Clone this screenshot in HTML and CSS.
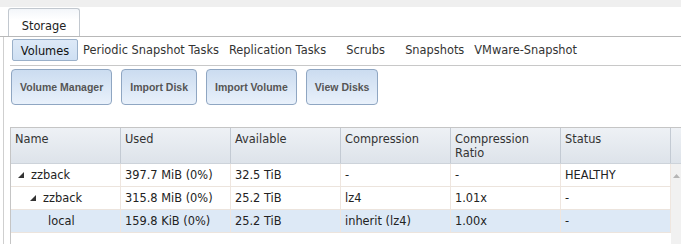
FILE: index.html
```html
<!DOCTYPE html>
<html lang="en">
<head>
<meta charset="UTF-8" />
<title>Storage</title>
<link rel="stylesheet" href="styles.css">
</head>
<body>
  <div class="topbar"></div>

  <div class="tabstrip">
    <div class="tab active">Storage</div>
  </div>

  <div class="panel">
    <div class="subtabs">
      <span class="subtab selected">Volumes</span>
      <span class="subtab">Periodic Snapshot Tasks</span>
      <span class="subtab">Replication Tasks</span>
      <span class="subtab">Scrubs</span>
      <span class="subtab">Snapshots</span>
      <span class="subtab">VMware-Snapshot</span>
    </div>

    <div class="toolbar">
      <button class="btn">Volume Manager</button>
      <button class="btn">Import Disk</button>
      <button class="btn">Import Volume</button>
      <button class="btn">View Disks</button>
    </div>

    <div class="grid">
      <div class="grid-head">
        <div class="hcell">Name</div>
        <div class="hcell">Used</div>
        <div class="hcell">Available</div>
        <div class="hcell">Compression</div>
        <div class="hcell">Compression<br>Ratio</div>
        <div class="hcell">Status</div>
        <div class="hfill"></div>
      </div>
      <div class="grid-body">
        <div class="rows">
          <div class="row">
            <div class="cell name lvl0"><svg class="twisty" width="6" height="6" viewBox="0 0 6 6"><polygon points="6,0 6,6 0,6" /></svg>zzback</div>
            <div class="cell">397.7 MiB (0%)</div>
            <div class="cell">32.5 TiB</div>
            <div class="cell">-</div>
            <div class="cell">-</div>
            <div class="cell">HEALTHY</div>
          </div>
          <div class="row">
            <div class="cell name lvl1"><svg class="twisty" width="6" height="6" viewBox="0 0 6 6"><polygon points="6,0 6,6 0,6" /></svg>zzback</div>
            <div class="cell">315.8 MiB (0%)</div>
            <div class="cell">25.2 TiB</div>
            <div class="cell">lz4</div>
            <div class="cell">1.01x</div>
            <div class="cell">-</div>
          </div>
          <div class="row selected">
            <div class="cell name lvl2">local</div>
            <div class="cell">159.8 KiB (0%)</div>
            <div class="cell">25.2 TiB</div>
            <div class="cell">inherit (lz4)</div>
            <div class="cell">1.00x</div>
            <div class="cell">-</div>
          </div>
        </div>
        <div class="scrollbar">
          <svg class="arrow" width="7" height="4" viewBox="0 0 7 4"><polygon points="3.5,0 7,4 0,4" /></svg>
        </div>
      </div>
    </div>
  </div>
</body>
</html>
```

FILE: styles.css
```css
body {
  margin: 0;
  background: #fff;
  color: #222;
  font-family: "DejaVu Sans", Verdana, sans-serif;
  font-size: 11.4px;
  height: 244px;
  overflow: hidden;
}
.topbar {
  height: 7px;
  background: #efefef;
}
.tabstrip {
  display: flex;
  padding: 1px 0 0 8px;
  border-bottom: 1px solid #b8b8b8;
  height: 28px;
}
.tab {
  width: 72px;
  height: 28px;
  box-sizing: border-box;
  border: 1px solid #c2c8cf;
  border-bottom: none;
  border-radius: 3px 3px 0 0;
  background: linear-gradient(#f3f6fa, #fff 40%);
  text-align: center;
  line-height: 28px;
  margin-bottom: -1px;
  padding-top: 3px;
}
.panel {
  margin-left: 3px;
  border-left: 1px solid #cfcfcf;
  padding: 2px 0 0 6px;
  height: 210px;
}
.subtabs {
  display: flex;
  align-items: center;
  padding-bottom: 4px;
  border-bottom: 1px solid #c8c8c8;
}
.subtab {
  height: 22px;
  line-height: 22px;
  padding: 0 5px;
  min-width: 59px;
  text-align: center;
  color: #333;
}
.subtab.selected {
  margin-left: 2px;
  width: 66px;
  box-sizing: border-box;
  padding: 0;
  border: 1px solid #9ab0c9;
  border-radius: 2px;
  background: linear-gradient(#dde9f7, #cfe0f3);
  color: #111;
}
.toolbar {
  display: flex;
  gap: 9px;
  margin-top: 3px;
  margin-left: 1px;
}
.btn {
  height: 36px;
  padding: 0 8px;
  border: 1px solid #8fa6c2;
  border-radius: 4px;
  background: linear-gradient(#cbdcf0, #e9f1fb);
  color: #555;
  font-family: "Liberation Sans", Arial, sans-serif;
  font-weight: bold;
  font-size: 10.5px;
}
.grid {
  margin-top: 22px;
  border-left: 1px solid #c5c5c5;
  border-top: 1px solid #c5c5c5;
}
.grid-head {
  display: flex;
  height: 35px;
  background: linear-gradient(#eef1f5, #dde3ea);
  border-bottom: 1px solid #cdd3da;
}
.hcell {
  width: 110px;
  box-sizing: border-box;
  border-right: 1px solid #c3cad3;
  padding: 4px 4px 0;
  line-height: 14px;
  color: #333;
}
.hfill {
  flex: 1;
}
.grid-body {
  display: flex;
  height: 80px;
}
.rows {
  width: 660px;
}
.row {
  display: flex;
  height: 23px;
  box-sizing: border-box;
  border-bottom: 1px solid #ece4dd;
}
.row.selected {
  background: #dde9f6;
}
.cell {
  width: 110px;
  box-sizing: border-box;
  border-right: 1px solid #efe6df;
  padding-left: 4px;
  line-height: 22px;
  white-space: nowrap;
}
.cell:last-child {
  width: 110px;
}
.cell.name {
  display: flex;
  align-items: center;
}
.lvl0 { padding-left: 7px; }
.lvl1 { padding-left: 19px; }
.lvl2 { padding-left: 37px; }
.twisty {
  fill: #333;
  margin-right: 7px;
}
.scrollbar {
  flex: 1;
  background: #f1f1f1;
  text-align: center;
}
.arrow {
  fill: #b5b5b5;
  margin-top: 10px;
}
```
